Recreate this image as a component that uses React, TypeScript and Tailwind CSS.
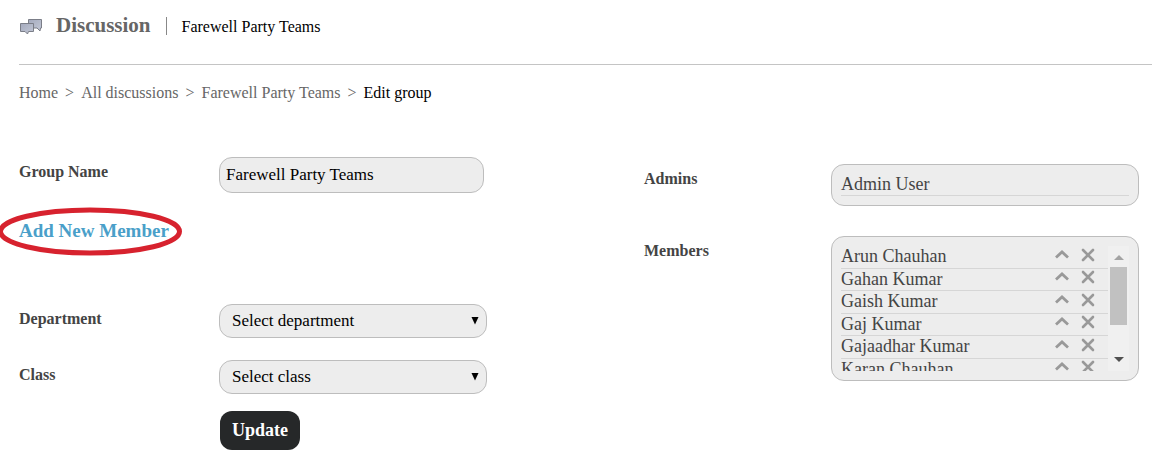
import { ReactNode } from "react";

const members = [
  "Arun Chauhan",
  "Gahan Kumar",
  "Gaish Kumar",
  "Gaj Kumar",
  "Gajaadhar Kumar",
  "Karan Chauhan",
];

function DiscussionIcon() {
  return (
    <svg className="mt-px" width="24" height="17" viewBox="0 0 24 17" aria-hidden="true">
      <defs>
        <linearGradient id="bubble" x1="0" y1="0" x2="1" y2="1">
          <stop offset="0" stopColor="#a4aabd" />
          <stop offset="1" stopColor="#c3c8d6" />
        </linearGradient>
      </defs>
      <path
        d="M9.500 1.500h13v8.500h-1l-.5 3-3-3h-8.500z"
        fill="url(#bubble)"
        stroke="#7b7e88"
        strokeLinejoin="round"
      />
      <path
        d="M1.500 5.500h13v8h-5l-1 2.500-2.500-2.500h-4.500z"
        fill="url(#bubble)"
        stroke="#7b7e88"
        strokeLinejoin="round"
      />
    </svg>
  );
}

function Field({
  id,
  label,
  className,
  children,
}: {
  id: string;
  label: string;
  className: string;
  children: ReactNode;
}) {
  return (
    <div className={className}>
      <label htmlFor={id} className="mt-[5px] w-[200px] shrink-0 text-base/5 font-bold text-[#444]">
        {label}
      </label>
      {children}
    </div>
  );
}

function Select({ id, placeholder }: { id: string; placeholder: string }) {
  return (
    <div className="relative w-[268px]">
      <select
        id={id}
        className="block h-[34px] w-full appearance-none rounded-[13px] border border-[#bdbdbd] bg-[#ededed] pl-3 pr-6 text-[17px] text-black"
      >
        <option>{placeholder}</option>
      </select>
      <svg
        className="pointer-events-none absolute right-2 top-3"
        width="8"
        height="9"
        viewBox="0 0 8 9"
        aria-hidden="true"
      >
        <path d="M.5 1h7L4 8.500z" fill="#000" />
      </svg>
    </div>
  );
}

function MemberRow({ name }: { name: string }) {
  return (
    <li className="flex items-center border-b border-[#d6d6d6]">
      <span className="flex-1">{name}</span>
      <button type="button" aria-label={`Promote ${name}`} className="mr-3 mb-1">
        <svg width="14" height="14" viewBox="0 0 14 14" aria-hidden="true">
          <path d="M1 9.500L7 4l6 5.500" fill="none" stroke="#999" strokeWidth="2.800" />
        </svg>
      </button>
      <button type="button" aria-label={`Remove ${name}`} className="mr-[13px] mb-1">
        <svg width="14" height="14" viewBox="0 0 14 14" aria-hidden="true">
          <path
            d="M2 2l10 10M12 2L2 12"
            fill="none"
            stroke="#999"
            strokeWidth="2.600"
            strokeLinecap="round"
          />
        </svg>
      </button>
    </li>
  );
}

function ScrollBar() {
  return (
    <div className="flex w-[21px] flex-col items-center bg-[#f0f0f0] pt-[9px]" aria-hidden="true">
      <svg width="10" height="5" viewBox="0 0 10 5">
        <path d="M0 5l5-5 5 5z" fill="#a3a3a3" />
      </svg>
      <div className="mt-[7px] h-[58px] w-[17px] bg-[#c1c1c1]" />
      <svg className="mt-auto mb-[9px]" width="10" height="5" viewBox="0 0 10 5">
        <path d="M0 0l5 5 5-5z" fill="#505050" />
      </svg>
    </div>
  );
}

export default function App() {
  return (
    <main className="bg-white pb-5 pl-[19px] font-['Liberation_Serif',serif] text-black">
      <header className="flex h-[65px] items-center border-b border-[#c4c4c4] pb-3">
        <DiscussionIcon />
        <h1 className="ml-[13px] text-[21px] font-bold text-[#666]">Discussion</h1>
        <span className="mx-[15px] h-[18px] w-px bg-[#888]" />
        <span className="pt-px text-base">Farewell Party Teams</span>
      </header>

      <nav aria-label="Breadcrumb" className="mt-[18px] flex gap-[7px] text-base/5 text-[#666]">
        <a href="#home">Home</a>
        <span>&gt;</span>
        <a href="#discussions">All discussions</a>
        <span>&gt;</span>
        <a href="#group">Farewell Party Teams</a>
        <span>&gt;</span>
        <span className="text-black">Edit group</span>
      </nav>

      <form className="mt-[54px] grid grid-cols-[125fr_99fr] items-start pr-[13px]">
        <div>
          <Field id="group-name" label="Group Name" className="flex items-start">
            <input
              id="group-name"
              defaultValue="Farewell Party Teams"
              className="h-9 w-[265px] rounded-[13px] border border-[#bdbdbd] bg-[#ededed] px-[6px] text-[17px] text-black"
            />
          </Field>
          <div className="mt-6 flex h-[27px] items-center">
            <a href="#add-member" className="relative text-[19px]/6 font-bold text-[#4a9fc9]">
              Add New Member
              <svg
                className="pointer-events-none absolute -left-5 -top-3"
                width="184"
                height="49"
                viewBox="0 0 184 49"
                aria-hidden="true"
              >
                <ellipse cx="91" cy="24.500" rx="89.500" ry="21.500" fill="none" stroke="#d7222e" strokeWidth="5" />
              </svg>
            </a>
          </div>
          <Field id="department" label="Department" className="mt-[60px] flex items-start">
            <Select id="department" placeholder="Select department" />
          </Field>
          <Field id="class" label="Class" className="mt-[22px] flex items-start">
            <Select id="class" placeholder="Select class" />
          </Field>
          <button
            type="submit"
            className="ml-[201px] mt-[17px] block h-[39px] rounded-[12px] bg-[#262829] px-3 text-[18px] font-bold text-white"
          >
            Update
          </button>
        </div>

        <div className="grid grid-cols-[187px_1fr] gap-y-[30px] pt-[7px]">
          <h2 className="mt-[5px] text-base/5 font-bold text-[#444]">Admins</h2>
          <div className="rounded-[13px] border border-[#bdbdbd] bg-[#ededed] px-[9px] pb-[9px] pt-2">
            <p className="border-b border-[#d6d6d6] text-[18px]/[22px] text-[#444]">Admin User</p>
          </div>
          <h2 className="mt-[5px] text-base/5 font-bold text-[#444]">Members</h2>
          <div className="rounded-[13px] border border-[#bdbdbd] bg-[#ededed] p-[9px]">
            <div className="flex h-[125px]">
              <div className="flex-1 overflow-hidden">
                <ul className="grid h-[135px] auto-rows-fr text-[18px]/[21px] text-[#444]">
                  {members.map((name) => (
                    <MemberRow key={name} name={name} />
                  ))}
                </ul>
              </div>
              <ScrollBar />
            </div>
          </div>
        </div>
      </form>
    </main>
  );
}
